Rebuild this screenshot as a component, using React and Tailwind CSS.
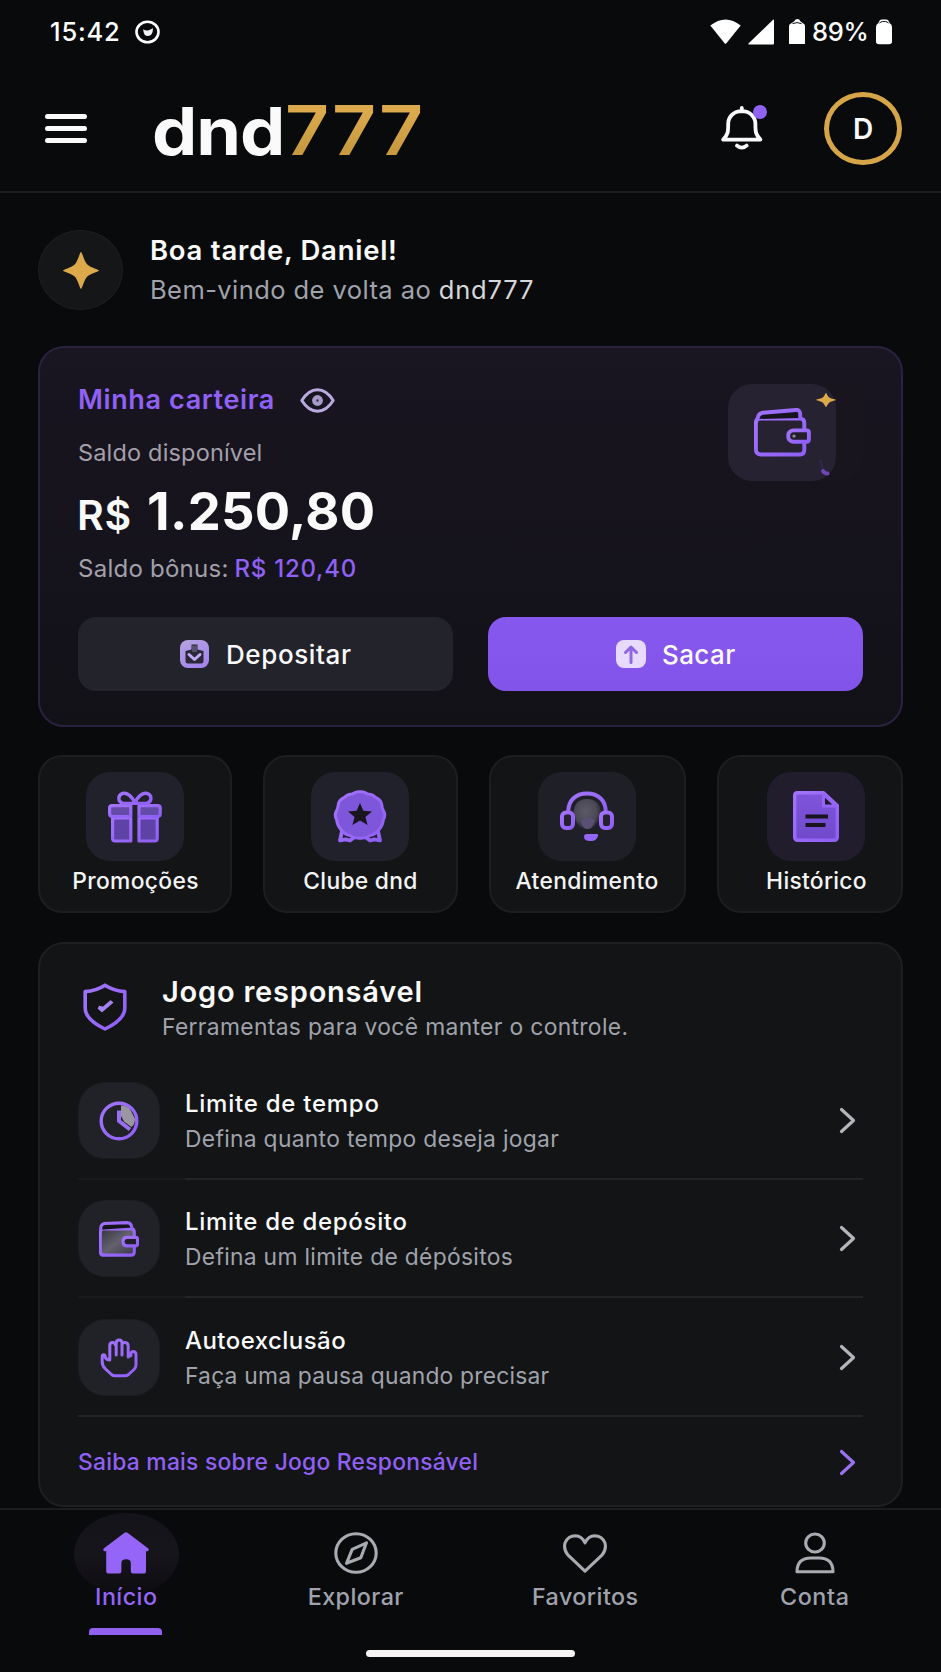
import React from "react";

const P = "#9465f6";

function PurpleDefs() {
  return (
    <svg width="0" height="0" className="absolute" aria-hidden="true">
      <defs>
        <linearGradient id="violet" x1="0" y1="0" x2="1" y2="1">
          <stop offset="0" stopColor="#a274fa" />
          <stop offset="1" stopColor="#8f5ff6" />
        </linearGradient>
        <linearGradient id="violetFill" x1="0" y1="0" x2="0" y2="1">
          <stop offset="0" stopColor="#7f55dc" />
          <stop offset="1" stopColor="#704acb" />
        </linearGradient>
        <linearGradient id="tray" x1="0" y1="0" x2="0.6" y2="1">
          <stop offset="0" stopColor="#b5a5dd" />
          <stop offset="1" stopColor="#a585ee" />
        </linearGradient>
        <radialGradient id="head" cx="0.45" cy="0.4" r="0.6">
          <stop offset="0" stopColor="#5c5a66" />
          <stop offset="0.65" stopColor="#4b4955" />
          <stop offset="1" stopColor="#26262d" />
        </radialGradient>
        <linearGradient id="leather" x1="0" y1="0" x2="1" y2="1">
          <stop offset="0" stopColor="#34323e" />
          <stop offset="0.5" stopColor="#64616e" />
          <stop offset="1" stopColor="#3a3844" />
        </linearGradient>
      </defs>
    </svg>
  );
}

function StatusBar() {
  return (
    <div className="flex h-16 shrink-0 items-center pl-[50px] text-[25.5px] font-medium text-white">
      <div className="w-[85px] pt-px tracking-[0.8px]">15:42</div>
      <svg width="25" height="24" viewBox="0 0 25 24" fill="none">
        <ellipse cx="12.5" cy="12" rx="11" ry="10.3" stroke="#fff" strokeWidth="2.6" />
        <path d="M8.2 9.2 Q10.8 11.2 13.8 10.3 L18 8.2 Q17.8 13.2 15.8 15 Q12.6 17 9.8 15 Q8.2 12.8 8.2 9.2Z" fill="#f2f2f2" />
      </svg>
      <div className="ml-auto flex items-center pr-[48px]">
        <svg width="31" height="26" viewBox="0 0 31 26" fill="#fff">
          <path d="M0.3 6.6 Q15.5 -5.4 30.7 6.6 L16.4 24.3 Q15.5 25.3 14.6 24.3Z" />
        </svg>
        <svg className="ml-[7px]" width="27" height="26" viewBox="0 0 27 26" fill="#fff">
          <path d="M25.3 0.5 Q26 0.3 26 1.2 V24.6 Q26 25.5 25 25.5 H1 Q-0.2 25.3 0.7 24.2Z" />
        </svg>
        <svg className="ml-[13px]" width="18" height="26" viewBox="0 0 18 26" fill="#fff">
          <path d="M1 7 Q1 5.3 3 4.4 L6 2.4 Q7.5 0 9.5 0 Q11.5 0 12.5 2.4 L15.3 4.4 Q17 5.3 17 7 V25 H1Z" />
          <path d="M4.5 4.6 Q9 2.6 13.5 4.6" stroke="#0a0b0c" strokeWidth="1" fill="none" />
        </svg>
        <div className="ml-[6px] w-[59px] pt-px tracking-[-0.3px]">89%</div>
        <svg className="ml-[4px]" width="18" height="26" viewBox="0 0 18 26" fill="#fff">
          <path d="M1 8 Q1 5.5 3.4 4 L4.5 1.8 Q5.2 0.4 7 0.4 H11 Q12.8 0.4 13.5 1.8 L14.6 4 Q17 5.5 17 8 V22.5 Q17 25.3 14 25.3 H4 Q1 25.3 1 22.5Z" />
          <path d="M4.5 4.3 Q5.5 2.4 7.5 2.6 H10.5 Q12.5 2.4 13.5 4.3" stroke="#0a0b0c" strokeWidth="1" fill="none" />
        </svg>
      </div>
    </div>
  );
}

function Header() {
  return (
    <header className="flex h-[129px] shrink-0 items-center border-b-2 border-[#1b1d1f] pt-px pr-[39px] pl-[45px]">
      <div className="flex w-[42px] flex-col gap-[7px]">
        <span className="h-[5px] rounded-sm bg-[#fafafa]" />
        <span className="h-[5px] rounded-sm bg-[#fafafa]" />
        <span className="h-[5px] rounded-sm bg-[#fafafa]" />
      </div>
      <div className="ml-[64.5px] flex w-[275px] items-center pt-[6px] leading-[72px]">
        <span className="w-[133px] origin-left scale-x-[1.09] text-[66px] font-bold tracking-[-1px] text-[#fafafa]">dnd</span>
        <span className="origin-left scale-x-[1.12] bg-linear-to-b from-[#dcaa4c] from-25% to-[#c79941] to-75% bg-clip-text text-[68.5px] font-semibold tracking-[1.2px] text-transparent">777</span>
      </div>
      <div className="relative ml-auto h-[46px] w-[48px]">
        <svg width="42" height="46" viewBox="0 0 42 46" fill="none" stroke="#fafafa" strokeWidth="3.8" strokeLinejoin="round" strokeLinecap="round">
          <path d="M20.8 3 V6.4 M20.8 6.2 C12.5 6.2 7.2 12 7.2 19 C7.2 27 7 29.5 2.2 34.6 H39.4 C34.6 29.5 34.4 27 34.4 19 C34.4 12 29 6.2 20.8 6.2Z" />
          <path d="M16 40.6 Q20.8 44.6 25.6 40.6" />
        </svg>
        <span className="absolute top-0 left-[32px] size-[14px] rounded-full bg-[#9063f4]" />
      </div>
      <div className="ml-[55px] flex h-[73px] w-[78px] items-center justify-center rounded-[50%] border-[5px] border-[#d6a548] pt-px text-[28px] font-semibold text-[#fafafa]">
        D
      </div>
    </header>
  );
}

function Sparkle({ className, w, h }) {
  return (
    <svg className={className} width={w} height={h} viewBox="0 0 36 36" preserveAspectRatio="none" fill="#dcaa4b">
      <path d="M18 0 C19.2 0 20.5 7.5 24 11.8 C28 15.500 36 16.800 36 18 C36 19.200 28 20.500 24 24.200 C20.500 28.500 19.200 36 18 36 C16.800 36 15.500 28.500 12 24.200 C8 20.500 0 19.200 0 18 C0 16.800 8 15.500 12 11.800 C15.500 7.500 16.800 0 18 0Z" />
    </svg>
  );
}

function Greeting() {
  return (
    <section className="flex h-20">
      <div className="flex h-20 w-[85px] items-center justify-center rounded-[50%] border border-[#1d1f21] bg-[#141617]">
        <Sparkle w={36} h={37} />
      </div>
      <div className="ml-[27px] flex flex-col gap-[8px] pt-[4px]">
        <div className="text-[27.5px] leading-8 font-semibold tracking-[0.74px] text-[#fafafa]">Boa tarde, Daniel!</div>
        <div className="text-[25.5px] leading-8 tracking-[0.43px] text-[#a0a3ab]">
          Bem-vindo de volta ao <span className="tracking-[0.8px] text-[#d6d7da]">dnd777</span>
        </div>
      </div>
    </section>
  );
}

function WalletIcon({ className, w, h, fill, sw, soft }) {
  return (
    <svg className={className} width={w} height={h} viewBox="0 0 57 49" preserveAspectRatio="none" fill="none" stroke="url(#violet)" strokeWidth={sw} strokeLinejoin="round" strokeLinecap="round">
      <path d="M50.3 22 V15 Q50.3 10.6 46 10.6 H6 Q1.9 10.6 1.9 15 V41.5 Q1.9 46.5 7 46.5 H46 Q50.3 46.5 50.3 41.5 V34" fill={fill} />
      <path d={soft ? "M2.4 12 Q2 4.2 8 3.4 L40 2.2 Q45.8 2.2 46.8 9" : "M3.4 11 Q4.4 5.2 9 4.8 L42 2 Q46 1.8 46.2 6 V10"} fill="#15131b" />
      <path d="M39.5 22.4 H52.5 Q54.9 22.4 54.9 24.6 V31.6 Q54.9 33.8 52.5 33.8 H39.5 Q34.2 33.4 34.2 28.1 Q34.2 22.8 39.5 22.4Z" fill="#221f2b" />
      {!soft && <circle cx="40" cy="28.1" r="1.7" fill="#8d8799" stroke="none" />}
    </svg>
  );
}

function WalletCard() {
  return (
    <section className="mt-9 flex h-[381px] flex-col rounded-[26px] border-2 border-[#2b2140] bg-linear-to-b from-[#191521] to-[#121117] px-[38px] pt-9">
      <div className="flex justify-between">
        <div>
          <div className="flex h-8 items-center">
            <span className="w-[222px] text-[27px] font-semibold tracking-[0.62px] text-[#9061f5]">Minha carteira</span>
            <svg width="35" height="25" viewBox="0 0 35 25" fill="none" stroke="#b9aadf" strokeWidth="3">
              <path d="M1.8 12.5 Q8.5 1.8 17.5 1.8 Q26.5 1.8 33.2 12.5 Q26.5 23.2 17.5 23.2 Q8.5 23.2 1.8 12.5Z" strokeLinejoin="round" />
              <circle cx="17.5" cy="12.5" r="5.4" fill="#a79aca" stroke="none" />
              <circle cx="17.5" cy="12.5" r="1.2" fill="#3a3348" stroke="none" />
            </svg>
          </div>
          <div className="mt-[22px] text-[23.5px] leading-[30px] tracking-[0.17px] text-[#a3a0ab]">Saldo disponível</div>
          <div className="mt-[13px] flex h-[60px] items-baseline leading-[60px] text-[#fafafa]">
            <span className="w-[69px] -translate-x-px text-[41px] font-semibold tracking-[0.8px]">R$</span>
            <span className="text-[52.5px] font-bold tracking-[0.25px]">1.250,80</span>
          </div>
          <div className="mt-[13px] text-[24px] leading-[30px] tracking-[0.25px] text-[#a3a0ab]">
            Saldo bônus: <span className="-ml-px font-medium tracking-[0.75px] text-[#9061f5]">R$ 120,40</span>
          </div>
        </div>
        <div className="h-[97px] w-[135px] rounded-[24px] bg-[#19151f]">
          <div className="relative flex h-[97px] w-[108px] items-center justify-center rounded-[24px] bg-[#262232]">
            <WalletIcon w={57} h={49} sw={3.9} fill="#262232" />
            <Sparkle className="absolute top-[9px] left-[88px]" w={20} h={14} />
            <svg className="absolute top-[76px] left-[90px]" width="14" height="17" viewBox="0 0 14 17" fill="none">
              <path d="M5 11 Q6.500 13.500 9.5 13.5" stroke="#6d45b5" strokeWidth="4" strokeLinecap="round" />
              <path d="M2.5 1 L4 7" stroke="#33264c" strokeWidth="2.5" strokeLinecap="round" />
            </svg>
          </div>
        </div>
      </div>
      <div className="mt-[33px] grid grid-cols-2 gap-[35px] text-[26px] font-medium">
        <button className="flex h-[74px] items-center rounded-[18px] bg-[#22232b] pl-[102px] text-[#fafafa]">
          <svg width="29" height="28" viewBox="0 0 29 28" fill="none">
            <rect width="29" height="28" rx="8" fill="url(#tray)" />
            <path d="M11.5 4.5 H17.5 V9.5 L23.5 11 V21 Q23.5 23.5 21 23.5 H8 Q5.5 23.5 5.5 21 V11 L11.5 9.5Z" fill="#2b2937" />
            <path d="M12 5.500 H17 V12 H12Z" fill="#57506e" />
            <path d="M9 14.5 L14.5 19.5 L20 14.5" stroke="#c3aef5" strokeWidth="3" strokeLinecap="round" strokeLinejoin="round" />
          </svg>
          <span className="ml-[17px] pt-px tracking-[0.6px]">Depositar</span>
        </button>
        <button className="flex h-[74px] items-center rounded-[18px] bg-linear-to-b from-[#8658ee] to-[#8254e9] pl-[128px] text-[#fafafa]">
          <svg width="30" height="28" viewBox="0 0 30 28" fill="none">
            <rect width="30" height="28" rx="8" fill="#e7dafd" />
            <path d="M15 22.5 V8 M9.5 12.5 L15 7 L20.5 12.5" stroke="#8f66e4" strokeWidth="3" strokeLinecap="round" strokeLinejoin="round" />
          </svg>
          <span className="ml-[16px] pt-px tracking-[0.4px]">Sacar</span>
        </button>
      </div>
    </section>
  );
}

function GiftIcon() {
  return (
    <svg width="54" height="52" viewBox="0 0 54 52" fill="none" stroke="url(#violet)" strokeWidth="3.2" strokeLinejoin="round" strokeLinecap="round">
      <path d="M22.8 27 H4.6 V47.5 Q4.6 50 7 50 H22.8Z M31 27 H49.2 V47.5 Q49.2 50 46.8 50 H31Z" fill="#5f42a6" />
      <path d="M22.8 14.6 H4 Q1.6 14.6 1.6 17 V22.5 Q1.6 25.5 4.4 25.5 H22.8Z M31 14.6 H49.8 Q52.2 14.6 52.2 17 V22.5 Q52.2 25.5 49.4 25.5 H31Z" fill="#654ba8" />
      <path d="M26.9 12.4 C24 4.5 18.6 1.4 14.8 2.4 C9.6 4 9.4 10.6 15 12.4Z M26.9 12.4 C29.8 4.5 35.2 1.4 39 2.4 C44.2 4 44.4 10.6 38.8 12.4Z" strokeWidth="3.4" />
    </svg>
  );
}

function BadgeIcon() {
  return (
    <svg width="54" height="53" viewBox="0 0 54 53" fill="none" strokeLinejoin="round">
      <path d="M9.5 39 L7 50.5 L12.5 49.3 L17 50.5 L23 46 M44.5 39 L47 50.5 L41.5 49.3 L37 50.5 L31 46" stroke="url(#violet)" strokeWidth="3.8" strokeLinecap="round" />
      <path d="M27 1.8 Q31 1 34.5 4 Q39.5 4 42.6 7.4 Q48 9.5 48.8 15 Q49 18 50.6 21 Q53 25.5 50.4 29.5 Q50 35 46.5 39 Q42.5 44.5 37 45.5 Q32 48.6 27 48.2 Q22 48.6 17 45.5 Q11.5 44.5 7.5 39 Q4 35 3.6 29.5 Q1 25.5 3.4 21 Q5 18 5.2 15 Q6 9.5 11.4 7.4 Q14.5 4 19.5 4 Q23 1 27 1.8Z" fill="#7d56da" stroke="url(#violet)" strokeWidth="3" />
      <path d="M27 13 L30.4 20.8 L39 21.4 L32.4 27 L34.6 35 L27 30.6 L19.4 35 L21.6 27 L15 21.4 L23.6 20.8Z" fill="#18151f" />
    </svg>
  );
}

function HeadsetIcon() {
  return (
    <svg width="54" height="51" viewBox="0 0 54 51" fill="none" stroke="url(#violet)" strokeWidth="4" strokeLinejoin="round">
      <path d="M27 8 C36 8 41.500 14 41 22 C40.500 30 34 38.500 27 38.500 C20 38.500 13.500 30 13.500 22 C13.500 14 18 8 27 8Z" fill="url(#head)" stroke="none" />
      <path d="M21 30 Q27 24 35 29 Q33 38 27.500 38 Q22 38 21 30Z" fill="#5a4f72" stroke="none" />
      <path d="M8.2 21 C8.2 9 16 2.4 27 2.4 C38 2.4 45.8 9 45.8 21" />
      <rect x="2" y="21.5" width="11" height="15.500" rx="4" fill="#24212f" />
      <rect x="41" y="21.5" width="11" height="15.500" rx="4" fill="#24212f" />
      <path d="M24 45.500 Q24 43 27 43 H37 Q38.500 43 38 45 Q36.500 50 31.500 50 Q24 50.500 24 45.500Z" fill={P} stroke="none" />
    </svg>
  );
}

function DocIcon() {
  return (
    <svg width="46" height="51" viewBox="0 0 46 51" fill="none" strokeLinejoin="round">
      <path d="M4.5 1.7 H30.5 L44.3 14.5 V46 Q44.3 49.3 41 49.3 H5 Q1.7 49.3 1.7 46 V4.5 Q1.7 1.7 4.5 1.7Z" fill="url(#violetFill)" stroke="url(#violet)" strokeWidth="3.4" />
      <path d="M30.5 3.5 V15 H43Z" fill="#1d1829" stroke="#9465f6" strokeWidth="3" />
      <path d="M12.5 25.5 H35 M12.5 34 H32.5" stroke="#17131f" strokeWidth="4" />
    </svg>
  );
}

function QuickTile({ icon, label, cardClass, tint, spacing }) {
  return (
    <div className={`flex h-[158px] flex-col items-center rounded-[24px] border-2 border-[#1c1e20] bg-[#131416] pt-[15px] ${cardClass}`}>
      <div className={`flex h-[89px] w-[98px] items-center justify-center rounded-[24px] ${tint}`}>{icon}</div>
      <div className={`mt-[6px] ml-px text-[22.8px] leading-7 font-medium whitespace-nowrap text-[#f4f4f5] ${spacing}`}>{label}</div>
    </div>
  );
}

function QuickLinks() {
  return (
    <section className="mt-7 flex gap-[31px]">
      <QuickTile icon={<GiftIcon />} label="Promoções" cardClass="w-[194px]" tint="bg-[#20212a]" spacing="tracking-[0.35px]" />
      <QuickTile icon={<BadgeIcon />} label="Clube dnd" cardClass="w-[195px] pr-px" tint="bg-[#20212a]" spacing="tracking-[0.3px]" />
      <QuickTile icon={<HeadsetIcon />} label="Atendimento" cardClass="w-[197px] pr-[2px]" tint="bg-[#1f2027]" spacing="tracking-[0.4px]" />
      <QuickTile icon={<DocIcon />} label="Histórico" cardClass="w-[186px] pl-[12px]" tint="bg-[#221d2d]" spacing="tracking-[0.3px]" />
    </section>
  );
}

function Chevron({ color }) {
  return (
    <svg className="mr-[7px] ml-auto" width="17" height="27" viewBox="0 0 17 27" fill="none" stroke={color} strokeWidth="3.200" strokeLinecap="round" strokeLinejoin="round">
      <path d="M2.5 2.5 L14.5 13.5 L2.5 24.5" />
    </svg>
  );
}

function ClockIcon() {
  return (
    <svg width="40" height="40" viewBox="0 0 40 40" fill="none">
      <circle cx="20" cy="20" r="17.8" stroke="url(#violet)" strokeWidth="3.4" />
      <path d="M22 4.500 Q28 4.500 31.500 9 L36 18 Q36 23 32.500 26 L25 20.500 L22 15Z" fill="#9a97a3" />
      <path d="M20 9.500 V20 L31 28.500" stroke="#9a6ff5" strokeWidth="4" strokeLinejoin="round" />
    </svg>
  );
}

function HandIcon() {
  return (
    <svg className="mr-[1px]" width="38" height="40" viewBox="0 0 38 40" fill="none" stroke="url(#violet)" strokeWidth="3" strokeLinejoin="round" strokeLinecap="round">
      <path d="M9.8 21.5 V7.5 Q9.8 4.4 12.5 4.4 Q15 4.4 15.2 7 M16.200 17 V5 Q16.200 2 19.200 2 Q22 2 22 5 V17 M22 6.5 Q22.4 4.2 25 4.4 Q28.2 4.6 28.2 8 V19 M28.2 18.500 L31 17.500 Q30.500 13.500 33 13.500 Q36 13.500 36 17 V27 Q36 29.500 34 31.500 L28.500 36.500 Q27 37.800 25 37.800 H14.5 Q13 37.800 11.5 36.5 L5.500 31 Q2.2 28 2.2 24 V18.5 Q2.400 16 4.8 17.2 L5.500 20 Q7 22 9.8 22" />
    </svg>
  );
}

function ToolRow({ icon, title, text, rowClass, lead, titleSpacing, textSpacing }) {
  return (
    <div className={`flex flex-col ${rowClass}`}>
      <div className="flex flex-1 items-center pt-[2px]">
        <div className="flex h-[77px] w-[82px] items-center justify-center rounded-[27px] border border-[#1c1d21] bg-[#212228]">{icon}</div>
        <div className="ml-[25px] flex flex-col gap-[7px] pt-px">
          <div className={`text-[24px] leading-7 font-medium text-[#fafafa] ${titleSpacing}`}>{title}</div>
          <div className={`text-[22.8px] leading-7 text-[#a0a3ab] ${textSpacing}`}>{text}</div>
        </div>
        <Chevron color="#b4b5ba" />
      </div>
      <div className="flex h-0.5">
        <div className={`w-[107px] ${lead}`} />
        <div className="flex-1 bg-[#232427]" />
      </div>
    </div>
  );
}

function ResponsiblePlay() {
  return (
    <section className="mt-[29px] flex h-[565px] flex-col rounded-[26px] border-2 border-[#1d1f21] bg-[#131416] px-[38px] pt-8">
      <div className="flex h-[65px]">
        <svg className="mt-[7px] ml-[5px]" width="44" height="48" viewBox="0 0 44 48" fill="none" stroke="url(#violet)" strokeWidth="3.600" strokeLinejoin="round">
          <path d="M22 2.2 Q31 8 41.8 8.600 V25 Q41.8 36.500 22 46 Q2.2 36.500 2.2 25 V8.600 Q13 8 22 2.200Z" />
          <path d="M15.5 25.500 L19 28.500 L29.500 19.500 L27.500 18 L20 24.500 L16.500 23.500Z" fill="#a684f2" stroke="#a684f2" strokeWidth="1.500" />
        </svg>
        <div className="ml-[35px]">
          <div className="text-[29px] leading-8 font-semibold tracking-[0.78px] text-[#fafafa]">Jogo responsável</div>
          <div className="mt-[5px] text-[22.8px] leading-7 tracking-[0.36px] text-[#a0a3ab]">Ferramentas para você manter o controle.</div>
        </div>
      </div>
      <ToolRow icon={<ClockIcon />} title="Limite de tempo" text="Defina quanto tempo deseja jogar" rowClass="mt-[21px] h-[118px]" lead="bg-[#191a1c]" titleSpacing="tracking-[0.75px]" textSpacing="tracking-[0.32px]" />
      <ToolRow icon={<WalletIcon w={40} h={36} sw={4.4} fill="url(#leather)" soft />} title="Limite de depósito" text="Defina um limite de dépósitos" rowClass="h-[118.5px]" lead="bg-[#191a1c]" titleSpacing="tracking-[0.68px]" textSpacing="tracking-[0.32px]" />
      <ToolRow icon={<HandIcon />} title="Autoexclusão" text="Faça uma pausa quando precisar" rowClass="h-[119.5px]" lead="bg-[#232427]" titleSpacing="tracking-[0.45px]" textSpacing="tracking-[0.22px]" />
      <a className="flex h-[88px] items-center pt-[2px] text-[22.8px] font-medium tracking-[0.27px] text-[#9061f5]">
        Saiba mais sobre Jogo Responsável
        <Chevron color="#9a72ee" />
      </a>
    </section>
  );
}

function NavItem({ icon, label, active, spacing }) {
  return (
    <div className="relative flex flex-col items-center pt-[22px]">
      {active && <div className="absolute top-[3px] h-[82px] w-[105px] rounded-[50%] bg-linear-to-b from-[#15131a] via-[#17151c] to-[#0d0c10]" />}
      <div className="relative flex h-[42px] items-center">{icon}</div>
      <div className={`relative mt-[9px] text-[23.3px] leading-7 font-medium ${spacing} ${active ? "text-[#9465f6]" : "text-[#a0a3ab]"}`}>{label}</div>
      {active && <div className="mt-[17px] mr-px h-[7px] w-[73px] rounded-t-[4px] bg-[#8f61ee]" />}
    </div>
  );
}

function BottomNav() {
  return (
    <nav className="mt-px flex flex-1 flex-col items-center border-t-2 border-[#1b1d1f] bg-[#090a0b]">
      <div className="grid h-[140px] w-[918px] grid-cols-4">
        <NavItem
          active
          label="Início"
          spacing="tracking-[0.45px]"
          icon={
            <svg width="46" height="42" viewBox="0 0 46 42" fill="#9465f6">
              <path d="M21.5 0.7 Q23 -0.4 24.5 0.7 L45.3 16.5 Q46.5 19 44 19.3 H43 V39 Q43 41.600 40.5 41.6 H30 Q27.8 41.6 27.8 39.5 V31 Q27.8 27.3 23.1 27.3 Q18.4 27.3 18.4 31 V39.5 Q18.4 41.6 16 41.6 H6 Q3.2 41.6 3.2 39 V19.3 H2 Q-0.5 19 0.7 16.5Z" />
            </svg>
          }
        />
        <NavItem
          label="Explorar"
          spacing="tracking-[0.45px]"
          icon={
            <svg width="44" height="42" viewBox="0 0 44 42" fill="none" stroke="#a9abb2" strokeWidth="3.100" strokeLinejoin="round">
              <ellipse cx="22" cy="21" rx="20.2" ry="19.3" />
              <path d="M32.5 10.8 L26.8 25.8 L12.5 31.3 L18.2 17.3Z" />
            </svg>
          }
        />
        <NavItem
          label="Favoritos"
          spacing="tracking-[0.45px]"
          icon={
            <svg width="44" height="39" viewBox="0 0 44 39" fill="none" stroke="#a9abb2" strokeWidth="3.100" strokeLinejoin="round">
              <path d="M22 37.2 L4.800 20.800 Q0.4 15.5 2 9 Q5 1.8 12.5 1.8 Q18.5 2 22 8.8 Q25.5 2 31.500 1.8 Q39 1.8 42 9 Q43.6 15.5 39.2 20.8Z" />
            </svg>
          }
        />
        <NavItem
          label="Conta"
          spacing="tracking-[0.6px]"
          icon={
            <svg width="40" height="42" viewBox="0 0 40 42" fill="none" stroke="#a9abb2" strokeWidth="3.100" strokeLinejoin="round">
              <ellipse cx="20" cy="11" rx="9.3" ry="9" />
              <path d="M2 39.8 Q2 26 16 26 H24 Q38 26 38 39.8Z" />
            </svg>
          }
        />
      </div>
      <div className="h-[7px] w-[209px] rounded-full bg-[#f5f3f4]" />
    </nav>
  );
}

export default function App() {
  return (
    <div className="flex h-[1672px] w-[941px] flex-col overflow-hidden bg-[#090a0b] font-['Inter',sans-serif]">
      <PurpleDefs />
      <StatusBar />
      <Header />
      <main className="flex shrink-0 flex-col px-[38px] pt-[37px]">
        <Greeting />
        <WalletCard />
        <QuickLinks />
        <ResponsiblePlay />
      </main>
      <BottomNav />
    </div>
  );
}
